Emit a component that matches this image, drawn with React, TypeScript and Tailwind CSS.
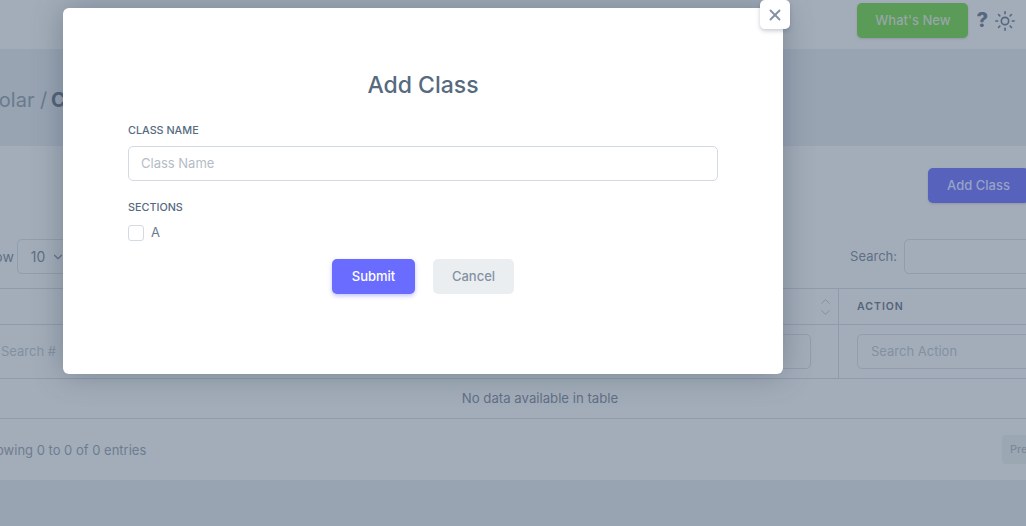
import React from 'react';
import { X, ChevronUp, ChevronDown, Sun } from 'lucide-react';

const font = "font-['Inter','Liberation_Sans',sans-serif]";

const App: React.FC = () => {
  return (
    <div className={`relative h-[526px] w-full overflow-hidden bg-[#98a4b2] ${font}`}>
      {/* Page behind the dialog */}
      <header className="flex h-[49px] items-start justify-end bg-[#a3adb9] pt-[3px] pr-[10px]">
        <button className="h-[35px] w-[111px] rounded-[5px] bg-[#5a9b57] text-[13px] font-medium text-[#97a6a8] shadow-sm">
          What's New
        </button>
        <span className="ml-[8px] mt-[5px] text-[20px] leading-[24px] font-extrabold text-[#56687f]">?</span>
        <Sun className="ml-[6px] mt-[7px] text-[#56687f]" size={22} strokeWidth={1.75} />
      </header>

      <div className="flex h-[97px] items-center text-[20px] text-[#6a7a8e]">
        <span className="ml-[-14px] mt-[4px]">
          Solar / <b className="ml-[-2px] font-bold text-[#4d5f76]">Classes</b>
        </span>
      </div>

      <section className="h-[334px] bg-[#a3adb9] pt-[22px]">
        <div className="flex justify-end">
          <button className="mr-[-3px] h-[35px] w-[101px] rounded-[5px] bg-[#5662bb] text-[13px] font-medium text-[#97a3c8] shadow-sm">
            Add Class
          </button>
        </div>

        <div className="mt-[36px] flex h-[35px] items-center justify-between text-[14px] text-[#5f6f85]">
          <div className="ml-[-23px] flex items-center">
            <span>Show</span>
            <div className="ml-[3px] flex h-[35px] w-[80px] items-center rounded-[5px] border border-[#909dac] pl-[13px]">
              10
              <ChevronDown className="ml-[6px]" size={14} />
            </div>
          </div>
          <div className="flex items-center text-[13px]">
            <span>Search:</span>
            <div className="ml-[7px] mr-[-60px] h-[35px] w-[182px] rounded-[5px] border border-[#909dac]" />
          </div>
        </div>

        <div className="mt-[14px] flex h-[37px] border-y border-[#8e9bab]">
          <div className="flex w-[839px] shrink-0 items-start justify-end border-r border-[#8e9bab] pr-[5px] pt-[5px] text-[#7f8d9e]">
            <div className="flex flex-col">
              <ChevronUp className="-mb-[4px]" size={15} strokeWidth={1.5} />
              <ChevronDown size={15} strokeWidth={1.5} />
            </div>
          </div>
          <div className="pl-[18px] pt-[11px] text-[10.5px] leading-[14px] font-semibold tracking-[1px] text-[#536479]">ACTION</div>
        </div>

        <div className="flex h-[54px] border-b border-[#8e9bab]">
          <div className="flex w-[839px] shrink-0 items-center border-r border-[#8e9bab]">
            <div className="h-[35px] w-[100px] pl-[1px] pt-[8px] text-[13px] text-[#8290a1]">Search #</div>
            <div className="ml-auto mr-[27px] h-[35px] w-[100px] rounded-[5px] border border-[#909dac]" />
          </div>
          <div className="flex flex-1 items-center pl-[18px]">
            <div className="flex h-[35px] w-[200px] shrink-0 items-center rounded-[5px] border border-[#909dac] pl-[13px] text-[13px] text-[#8290a1]">
              Search Action
            </div>
          </div>
        </div>

        <div className="flex h-[39px] w-[1080px] items-center justify-center pt-[1px] text-[13.2px] text-[#5f6f85]">
          No data available in table
        </div>
        <div className="h-px bg-[#8e9bab]" />

        <div className="flex items-center justify-between pt-[16px]">
          <span className="ml-[-20px] pt-[2px] text-[13px] text-[#6d7c8f]">Showing 0 to 0 of 0 entries</span>
          <div className="mr-[-40px] h-[29px] w-[64px] rounded-[4px] bg-[#9ca7b4] pl-[8px] text-[11px] leading-[29px] font-medium text-[#7c8999]">
            Previous
          </div>
        </div>
      </section>

      {/* Add Class dialog */}
      <div className="absolute left-[63px] top-[8px] h-[366px] w-[720px] rounded-[6px] bg-white px-[65px] pt-[62px] shadow-[0_0_30px_rgba(70,85,105,0.45)]">
        <h2 className="text-center text-[23px] leading-[30px] font-medium text-[#566a7f]">Add Class</h2>

        <label className="mt-[24px] block text-[10.8px] leading-[14px] font-medium text-[#566a7f]">CLASS NAME</label>
        <input
          className="mt-[8px] block h-[35px] w-full rounded-[5px] border border-[#d4dae1] pb-[2px] pl-[12px] pr-[13px] text-[13px] outline-none placeholder:text-[#b4bdc6]"
          placeholder="Class Name"
        />

        <label className="mt-[20px] block text-[10.8px] leading-[14px] font-medium text-[#566a7f]">SECTIONS</label>
        <div className="mt-[10px] flex h-[16px] items-center text-[13px] text-[#697a8d]">
          <span className="h-[16px] w-[16px] rounded-[3px] border border-[#d4dae1]" />
          <span className="ml-[7px]">A</span>
        </div>

        <div className="mt-[18px] ml-[204px] flex gap-[18px]">
          <button className="h-[35px] w-[83px] rounded-[5px] bg-[#696cff] text-[13px] font-medium text-white shadow-[0_2px_4px_rgba(105,108,255,0.4)]">
            Submit
          </button>
          <button className="h-[35px] w-[81px] rounded-[5px] bg-[#ebeef0] text-[13px] font-medium text-[#8592a3]">
            Cancel
          </button>
        </div>
      </div>

      <button className="absolute left-[760px] top-0 flex h-[29px] w-[30px] items-center justify-center rounded-[5px] bg-white text-[#8592a3] shadow-[0_2px_4px_rgba(70,85,105,0.3)]">
        <X size={18} strokeWidth={2.5} />
      </button>
    </div>
  );
};

export default App;
